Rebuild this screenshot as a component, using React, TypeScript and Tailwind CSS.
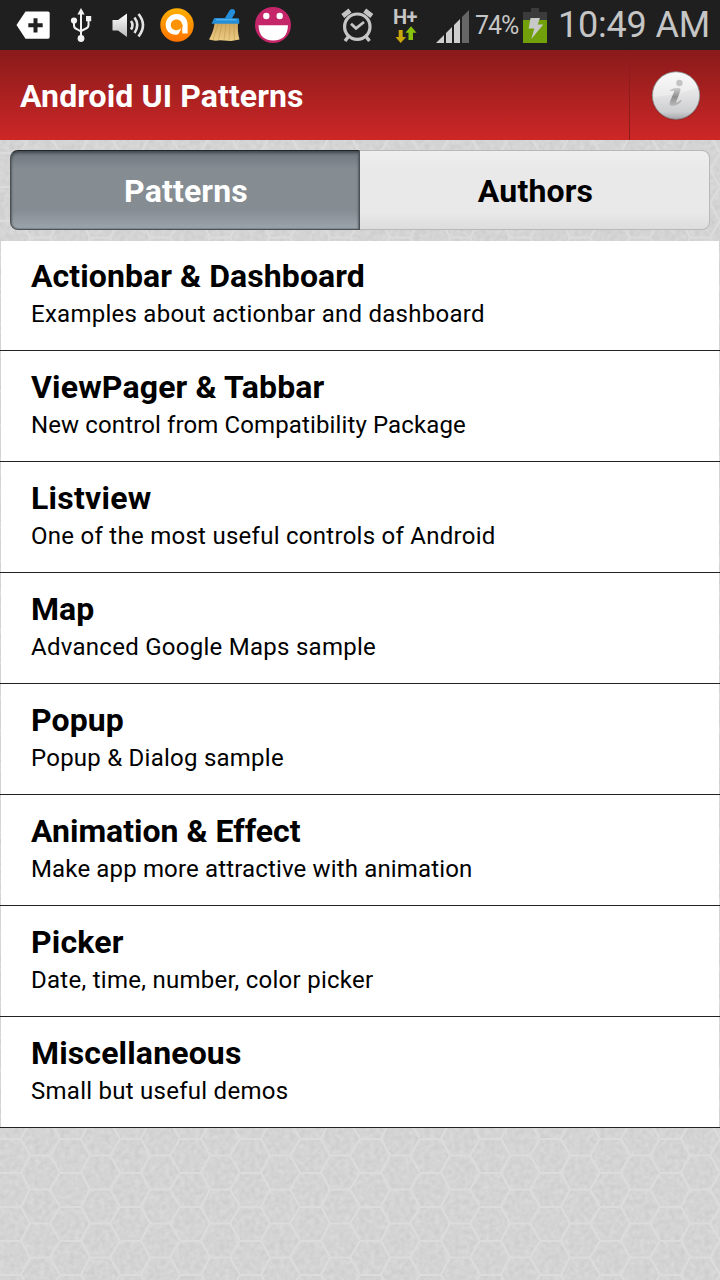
import React from "react";

const items = [
  { title: "Actionbar & Dashboard", sub: "Examples about actionbar and dashboard", tt: "tracking-[0.08px]", st: "tracking-[0.26px]" },
  { title: "ViewPager & Tabbar", sub: "New control from Compatibility Package", tt: "tracking-[0.16px]", st: "tracking-[0.12px]" },
  { title: "Listview", sub: "One of the most useful controls of Android", tt: "tracking-[0.25px]", st: "tracking-[0.27px]" },
  { title: "Map", sub: "Advanced Google Maps sample", tt: "tracking-normal", st: "tracking-[0.27px]" },
  { title: "Popup", sub: "Popup & Dialog sample", tt: "tracking-[0.1px]", st: "tracking-[0.24px]" },
  { title: "Animation & Effect", sub: "Make app more attractive with animation", tt: "tracking-normal", st: "tracking-[0.15px]" },
  { title: "Picker", sub: "Date, time, number, color picker", tt: "tracking-[0.2px]", st: "tracking-[0.27px]" },
  { title: "Miscellaneous", sub: "Small but useful demos", tt: "tracking-[0.15px]", st: "tracking-[0.26px]" },
];

function Texture() {
  return (
    <svg className="absolute inset-0 -z-10" width="720" height="1280" aria-hidden="true">
      <defs>
        <filter id="grain" x="0" y="0" width="100%" height="100%" colorInterpolationFilters="sRGB">
          <feTurbulence type="fractalNoise" baseFrequency="0.2" numOctaves="2" seed="4" />
          <feColorMatrix values="0.08 0 0 0 0.790  0.08 0 0 0 0.790  0.08 0 0 0 0.790  0 0 0 0 1" />
        </filter>
        <pattern id="hex" width="60" height="34" y="16" patternUnits="userSpaceOnUse">
          <path
            d="M0 .8H21L30 17.5L21 34.5M30 17.5H50L60 .8M50 17.5L60 34.5"
            fill="none"
            stroke="#dcdcdc"
            strokeWidth="2.2"
          />
        </pattern>
      </defs>
      <rect width="720" height="1280" fill="#d4d4d4" />
      <rect width="720" height="1280" filter="url(#grain)" />
      <rect width="720" height="1280" fill="url(#hex)" />
    </svg>
  );
}

function StatusIcons() {
  return (
    <svg className="absolute left-0 top-0" width="720" height="50" aria-hidden="true">
      <defs>
        <linearGradient id="orange" x2="0" y2="1">
          <stop stopColor="#ffb000" />
          <stop offset="1" stopColor="#ff7300" />
        </linearGradient>
        <linearGradient id="straw" x2="0" y2="1">
          <stop stopColor="#d0a860" />
          <stop offset="1" stopColor="#edcd84" />
        </linearGradient>
        <linearGradient id="speaker" x2="0" y2="1">
          <stop stopColor="#fff" />
          <stop offset="1" stopColor="#bbb" />
        </linearGradient>
      </defs>
      <path d="M25.500 11.500H48Q49.700 11.500 49.700 13V37Q49.700 38.700 48 38.700H25.500L16.500 25Z" fill="#fff" />
      <path d="M28.300 25.300H42.700M35.500 18.300V32.500" stroke="#222" strokeWidth="4" />
      <g stroke="#f2f2f2" strokeWidth="2" fill="none">
        <path d="M81 13V38M74 21V25.500Q74 28 76.500 29L81 31.500M88.500 20V25Q88.500 27.500 86 28.500L81 31" />
      </g>
      <path d="M81 8L84.600 14.500H77.400ZM86 16H91.200V21.200H86Z" fill="#f2f2f2" />
      <circle cx="74" cy="20.500" r="3.100" fill="#f2f2f2" />
      <circle cx="81" cy="38.500" r="3.400" fill="#f2f2f2" />
      <path d="M112.500 20H118L127 13.500V37L118 30.500H112.500Z" fill="url(#speaker)" />
      <g stroke="#e4e4e4" strokeWidth="2.600" fill="none">
        <path d="M131 21Q134 25 131 29.500" />
        <path d="M134.500 17.500Q140 25 134.500 33" />
        <path d="M138.500 14Q147.500 25 138.500 36.500" />
      </g>
      <circle cx="177" cy="25" r="16.700" fill="url(#orange)" />
      <path
        d="M176 34.800C169.500 34.800 165.700 30.300 165.700 25C165.700 18.700 170.500 14 176.800 14C183.200 14 187.600 18.500 187.600 24.500V33.500H182.300V29.300C181 32.800 178.700 34.800 176 34.800Z"
        fill="#fff"
      />
      <path
        d="M176.200 30.200C173 30.200 170.800 28 170.800 25C170.800 21.800 173.300 19.500 176.500 19.500C179.800 19.500 182 21.800 182 24.800C182 28 179.500 30.200 176.200 30.200Z"
        fill="#ff9200"
      />
      <path d="M182 24.500C182 29.500 180.500 33 178 35" fill="none" stroke="#ff8500" strokeWidth="1.400" />
      <path d="M214.500 23C214 30 211 36 209 39.500Q214 41.300 220 40.300L231 41L239.500 39.500C238 34 237.500 29 238 23Z" fill="url(#straw)" />
      <path d="M218 24L213 40M222 24L218.500 40M226 24L224 40M230 24L229 40M234 24L234.500 40" stroke="#b18a43" strokeWidth=".4" />
      <path d="M213.500 19.500L214.500 18H225L229.500 10.500Q231.500 8.300 234 9.600Q236 11.500 234.500 14L232 18.200H238.500L239.300 20V23.800H211.500Z" fill="#248ed8" />
      <path d="M216 19.800H236.500" stroke="#58b9f1" strokeWidth="1.200" />
      <circle cx="273" cy="25" r="18" fill="#c5266a" />
      <circle cx="266.300" cy="16" r="3.200" fill="#fff" />
      <circle cx="279.700" cy="16" r="3.200" fill="#fff" />
      <path d="M258.500 25.300H288Q287.500 40.500 273.200 40.500Q259 40.500 258.500 25.300Z" fill="#fff" />
      <g stroke="#c5c5c5" fill="none">
        <circle cx="357.300" cy="26.700" r="12.700" strokeWidth="3.200" />
        <path d="M351 23.700L356 28.300L364 22" strokeWidth="2.800" />
        <path d="M342.800 16L350 10.500M364.700 10.500L371.800 16" strokeWidth="4.800" />
        <path d="M348.500 36.500L345 41M366 36.500L369.500 41" strokeWidth="3.500" />
      </g>
      <path d="M398.700 30H402.700V37H406L400.700 43L395.500 37H398.700Z" fill="#cba60a" />
      <path d="M411 26.300L416.500 32.800H413V40H408.500V32.800H405.500Z" fill="#88c20b" />
      <path d="M436 43L444 35V43ZM446 33L452 27V43H446ZM454 25L460 19V43H454Z" fill="#cecece" />
      <path d="M462 17L469 10V43H462Z" fill="#666" />
      <path d="M523 12H531V8H539V12H547V20H523Z" fill="#3b3b3b" />
      <path d="M523 20H547V43H523Z" fill="#72a00a" />
      <path d="M530.500 18H540L537.700 24.500H543.300L531.300 39L534.300 28.500H528.700Z" fill="#c9c9c9" />
    </svg>
  );
}

function InfoIcon() {
  return (
    <svg width="50" height="52" viewBox="0 0 50 52" className="mt-0.5" aria-hidden="true">
      <defs>
        <linearGradient id="ball" x2="0" y2="1">
          <stop stopColor="#f8f8f8" />
          <stop offset=".5" stopColor="#e2e2e3" />
          <stop offset=".85" stopColor="#cdced0" />
          <stop offset="1" stopColor="#a5a7aa" />
        </linearGradient>
        <linearGradient id="glyph" x2="0" y2="1">
          <stop stopColor="#d0d0d0" />
          <stop offset=".5" stopColor="#8e8e8e" />
          <stop offset="1" stopColor="#bbb" />
        </linearGradient>
      </defs>
      <circle cx="25" cy="26" r="24.300" fill="#7a2020" opacity=".5" />
      <circle cx="25" cy="25.500" r="23.700" fill="url(#ball)" stroke="#858789" strokeWidth=".8" />
      <path d="M2.500 27C15 26 31 24 46.500 17A23 23 0 0 0 3 20Z" fill="#fff" opacity=".3" />
      <circle cx="28.400" cy="13" r="3.200" fill="#c4c4c4" />
      <path d="M18.500 21Q21.500 17.700 27.500 17.700Q30.300 18 29.300 21L25.300 31.500Q24.500 33.500 27 32.300L31 29.500Q28 35.800 21.500 36Q17.300 36 19 31.500L23 22Q23.500 20 21.500 20.800Z" fill="url(#glyph)" />
    </svg>
  );
}

export default function App() {
  return (
    <div className="relative isolate flex h-[1280px] w-[720px] flex-col overflow-hidden font-['Roboto','Noto_Sans',sans-serif] text-black">
      <Texture />
      <div className="relative flex h-[50px] shrink-0 items-center justify-end bg-[#1f1f1f] text-[#c5c5c5]">
        <StatusIcons />
        <span className="absolute left-[393px] top-[7px] text-[20px] font-bold leading-5 tracking-[-0.5px]">H+</span>
        <span className="absolute left-[475px] top-[11px] text-[25px] leading-[30px] tracking-[-1.1px]">74%</span>
        <span className="absolute left-[558px] top-[4px] whitespace-nowrap text-[36px] leading-[42px] tracking-[-0.2px]">10:49 AM</span>
      </div>
      <header className="flex h-[90px] shrink-0 items-stretch bg-linear-to-b from-[#8a1a1a] to-[#cd2727] text-white">
        <h1 className="flex flex-1 items-center pl-5 pt-0.5 text-[32px] font-bold tracking-[0.1px]">Android UI Patterns</h1>
        <div className="flex w-[91px] items-center justify-center border-l border-[#8f1b1b] pl-px">
          <InfoIcon />
        </div>
      </header>
      <div className="flex h-[100px] shrink-0 p-2.5 text-[32px] font-bold tracking-[0.15px]">
        <div className="flex w-[350px] items-center justify-center rounded-l-lg border border-[#4b5256] border-t-[#202629] bg-[linear-gradient(#6d767c,#858d93_23%,#858d93_75%,#9da5ac)] text-white shadow-[inset_0_2px_3px_#424b50,inset_0_0_2px_#4b5357]">
          <span className="pl-[2px] pt-0.5">Patterns</span>
        </div>
        <div className="flex w-[350px] items-center justify-center rounded-r-lg border border-l-0 border-[#b7b9b8] bg-[linear-gradient(#efefef,#e9e9e9_22%,#e9e9e9_78%,#dddddd)]">
          <span className="pl-[2px] pt-0.5">Authors</span>
        </div>
      </div>
      <ul className="flex flex-col pt-px">
        {items.map(({ title, sub, tt, st }) => (
          <li key={title} className="group flex h-[111px] flex-col border-b border-[#222] px-px first:h-[110px]">
            <div className="flex flex-1 flex-col bg-white pl-[30px] pt-4 group-first:pt-[15px]">
              <span className={`text-[32px] font-bold leading-10 ${tt}`}>{title}</span>
              <span className={`text-[24px] leading-9 ${st}`}>{sub}</span>
            </div>
          </li>
        ))}
      </ul>
    </div>
  );
}
